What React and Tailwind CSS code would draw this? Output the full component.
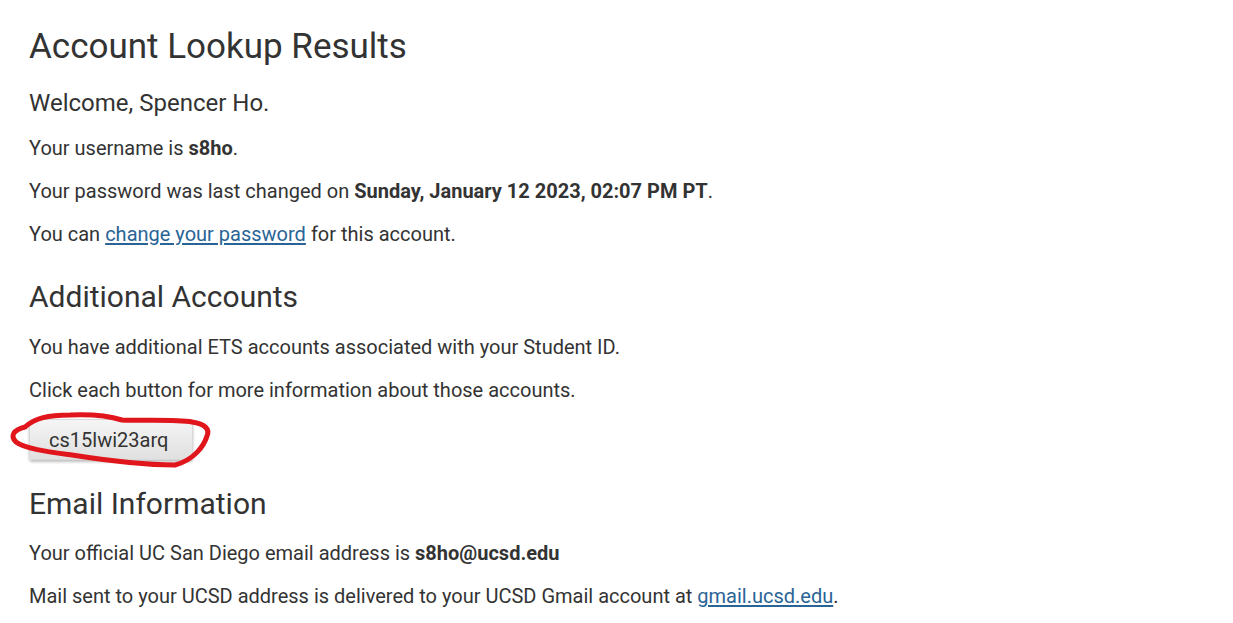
const FONT = { fontFamily: 'Roboto, "Liberation Sans", sans-serif' };

function Annotation() {
  return (
    <svg
      className="pointer-events-none absolute -left-[29px] -top-[17px]"
      width="230"
      height="75"
      viewBox="0 0 230 75"
      fill="none"
    >
      <path
        d="M25 25 C 35 16, 48 13, 70 13 C 92 12, 106 13, 122 18 C 140 19, 175 17, 192 20 C 205 22, 210 27, 207 34 C 204 44, 194 58, 175 63 C 150 63, 110 59, 72 53 C 50 50, 25 47, 16 40 C 10 34, 13 28, 25 25"
        stroke="#e0161c"
        strokeWidth="5"
        strokeLinecap="round"
        strokeLinejoin="round"
      />
    </svg>
  );
}

function App() {
  return (
    <div className="min-h-screen bg-white text-[#333333]" style={FONT}>
      <div className="px-[29px] pt-[24px]">
        <h1 className="mb-[18px] text-[35px] leading-[46px]">Account Lookup Results</h1>

        <h2 className="mb-[16px] text-[24px] leading-[30px]">Welcome, Spencer Ho.</h2>

        <p className="mb-[15px] text-[20px] leading-[28px]">
          Your username is <b className="font-bold">s8ho</b>.
        </p>
        <p className="mb-[15px] text-[20px] leading-[28px]">
          Your password was last changed on{' '}
          <b className="font-bold">Sunday, January 12 2023, 02:07 PM PT</b>.
        </p>
        <p className="mb-[15px] text-[20px] leading-[28px]">
          You can{' '}
          <a href="#" className="text-[#2a6496] underline underline-offset-2">
            change your password
          </a>{' '}
          for this account.
        </p>

        <h3 className="mb-[17px] mt-[30px] text-[30px] leading-[38px]">Additional Accounts</h3>

        <p className="mb-[15px] text-[20px] leading-[28px]">
          You have additional ETS accounts associated with your Student ID.
        </p>
        <p className="mb-[15px] text-[20px] leading-[28px]">
          Click each button for more information about those accounts.
        </p>

        <div className="relative w-[165px]">
          <button className="block h-[41px] w-[164px] rounded-[3px] border border-[#d8d8d8] bg-gradient-to-b from-[#f5f5f5] to-[#e0e0e0] pl-[19px] text-left text-[20px] text-[#333333] shadow-[0_2px_3px_rgba(0,0,0,0.25)]">
            cs15lwi23arq
          </button>
          <Annotation />
        </div>

        <h3 className="mb-[16px] mt-[25px] text-[30px] leading-[38px]">Email Information</h3>

        <p className="mb-[15px] text-[20px] leading-[28px]">
          Your official UC San Diego email address is <b className="font-bold">s8ho@ucsd.edu</b>
        </p>
        <p className="mb-[15px] text-[20px] leading-[28px]">
          Mail sent to your UCSD address is delivered to your UCSD Gmail account at{' '}
          <a href="#" className="text-[#2a6496] underline underline-offset-2">
            gmail.ucsd.edu
          </a>
          .
        </p>
      </div>
    </div>
  );
}

export default App;
